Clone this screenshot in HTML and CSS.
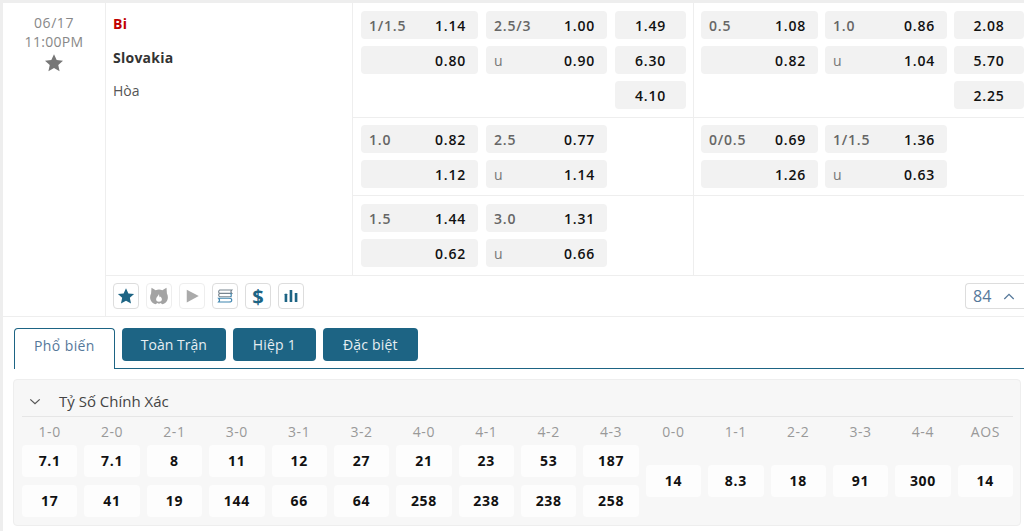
FILE: index.html
```html
<!DOCTYPE html>
<html>
<head>
  <meta charset="utf-8">
  <title>Tỷ Số</title>
  <link rel="stylesheet" href="styles.css">
</head>
<body>
  <div class="page">
    <div class="match">
      <div class="date-col">
        <div class="day">06/17</div>
        <div class="time">11:00PM</div>
        <svg class="fav" viewBox="0 0 24 24"><path d="M12 1.500l3.200 7 7.600.8-5.700 5.100 1.600 7.500L12 18.100l-6.700 3.800 1.600-7.500L1.200 9.300l7.600-.8z"/></svg>
      </div>
      <div class="main-col">
        <div class="top">
          <div class="teams">
            <div class="team red">Bi</div>
            <div class="team">Slovakia</div>
            <div class="draw">Hòa</div>
          </div>
          <div class="markets">
            <div class="mrow row-a">
              <div class="market left">
                <div class="cell"><span class="lbl">1/1.5</span><b>1.14</b></div>
                <div class="cell wide"><span class="lbl">2.5/3</span><b>1.00</b></div>
                <div class="cell x12">1.49</div>
                <div class="cell"><b>0.80</b></div>
                <div class="cell wide"><span class="lbl u">u</span><b>0.90</b></div>
                <div class="cell x12">6.30</div>
                <div class="cell x12 third">4.10</div>
              </div>
              <div class="market right">
                <div class="cell"><span class="lbl">0.5</span><b>1.08</b></div>
                <div class="cell wide"><span class="lbl">1.0</span><b>0.86</b></div>
                <div class="cell x12">2.08</div>
                <div class="cell"><b>0.82</b></div>
                <div class="cell wide"><span class="lbl u">u</span><b>1.04</b></div>
                <div class="cell x12">5.70</div>
                <div class="cell x12 third">2.25</div>
              </div>
            </div>
            <div class="mrow row-b">
              <div class="market left">
                <div class="cell"><span class="lbl">1.0</span><b>0.82</b></div>
                <div class="cell wide"><span class="lbl">2.5</span><b>0.77</b></div>
                <div></div>
                <div class="cell"><b>1.12</b></div>
                <div class="cell wide"><span class="lbl u">u</span><b>1.14</b></div>
              </div>
              <div class="market right">
                <div class="cell"><span class="lbl">0/0.5</span><b>0.69</b></div>
                <div class="cell wide"><span class="lbl">1/1.5</span><b>1.36</b></div>
                <div></div>
                <div class="cell"><b>1.26</b></div>
                <div class="cell wide"><span class="lbl u">u</span><b>0.63</b></div>
              </div>
            </div>
            <div class="mrow row-c">
              <div class="market left">
                <div class="cell"><span class="lbl">1.5</span><b>1.44</b></div>
                <div class="cell wide"><span class="lbl">3.0</span><b>1.31</b></div>
                <div></div>
                <div class="cell"><b>0.62</b></div>
                <div class="cell wide"><span class="lbl u">u</span><b>0.66</b></div>
              </div>
              <div class="market right"></div>
            </div>
          </div>
        </div>
        <div class="toolbar">
          <div class="tools">
            <span class="tool"><svg viewBox="0 0 24 24" class="blue"><path d="M12 1.500l3.200 7 7.600.8-5.700 5.100 1.600 7.600L12 18.200 5.300 22l1.600-7.600L1.200 9.300l7.600-.8z"/></svg></span>
            <span class="tool off"><svg viewBox="0 0 24 24" class="wolf"><path fill-rule="evenodd" d="M3 2l5 3c2.500-1 5.500-1 8 0l5-3 .5 7c1.500 3 1.500 6 .3 8.500-1.300 2.500-3.300 4-5.800 4.500l-2-1.500-2 .7-2-.7-2 1.500c-2.500-.5-4.500-2-5.800-4.500C1 15 1 12 2.500 9zM12 9.500c-.5 2-3.500 3.500-3.500 6.500 0 2 1.500 3 3.500 3s3.500-1 3.500-3c0-1.500-1-2.500-1.500-3.500-.5.700-1 1-1.300.8-.5-1.300-.5-2.300-.7-3.800z"/></svg></span>
            <span class="tool off"><svg viewBox="0 0 24 24" class="grey"><path d="M5 3.500L21 12 5 20.500z"/></svg></span>
            <span class="tool"><svg viewBox="0 0 24 24" class="scroll"><path class="s-top" d="M5 4h16c-1.500 1.500-1.500 3 0 4.500H5C3 7.500 3 5 5 4zM5 8.500c-2 1-2 3.500 0 4.500h16"/><path class="s-bot" d="M3.500 15h14c2 0 3.500.700 3.500 2.500S19.500 20 17.500 20h-14c1.500-1.500 1.500-3.500 0-5zM19 8.500c2 1 2 3.500 0 4.500"/></svg></span>
            <span class="tool dollar">$</span>
            <span class="tool"><svg viewBox="0 0 24 24" class="blue"><rect x="3.500" y="9" width="3.500" height="11" rx=".5"/><rect x="10.200" y="4" width="3.500" height="16" rx=".5"/><rect x="17" y="8" width="3.500" height="12" rx=".5"/></svg></span>
          </div>
          <div class="count">84 <svg viewBox="0 0 14 8"><path d="M1.500 7L7 1.500 12.500 7"/></svg></div>
        </div>
      </div>
    </div>

    <div class="tabs">
      <div class="tab active">Phổ biến</div>
      <div class="tab full">Toàn Trận</div>
      <div class="tab">Hiệp 1</div>
      <div class="tab">Đặc biệt</div>
    </div>

    <div class="panel">
      <div class="panel-head">
        <svg viewBox="0 0 14 8"><path d="M1.500 1.500L7 6.500 12.500 1.500"/></svg>
        <span>Tỷ Số Chính Xác</span>
      </div>
      <div class="scores">
        <div class="score"><span>1-0</span><b>7.1</b><b>17</b></div>
        <div class="score"><span>2-0</span><b>7.1</b><b>41</b></div>
        <div class="score"><span>2-1</span><b>8</b><b>19</b></div>
        <div class="score"><span>3-0</span><b>11</b><b>144</b></div>
        <div class="score"><span>3-1</span><b>12</b><b>66</b></div>
        <div class="score"><span>3-2</span><b>27</b><b>64</b></div>
        <div class="score"><span>4-0</span><b>21</b><b>258</b></div>
        <div class="score"><span>4-1</span><b>23</b><b>238</b></div>
        <div class="score"><span>4-2</span><b>53</b><b>238</b></div>
        <div class="score"><span>4-3</span><b>187</b><b>258</b></div>
        <div class="score even"><span>0-0</span><b>14</b></div>
        <div class="score even"><span>1-1</span><b>8.3</b></div>
        <div class="score even"><span>2-2</span><b>18</b></div>
        <div class="score even"><span>3-3</span><b>91</b></div>
        <div class="score even"><span>4-4</span><b>300</b></div>
        <div class="score even"><span>AOS</span><b>14</b></div>
      </div>
    </div>
  </div>
</body>
</html>
```

FILE: styles.css
```css
html, body {
  margin: 0;
  padding: 0;
  background: #fff;
  overflow: hidden;
}

body {
  height: 531px;
  color: #333;
  font-family: "Open Sans", "Noto Sans", sans-serif;
  font-size: 14px;
}

.page {
  height: 531px;
  box-sizing: border-box;
  border-top: 3px solid #eee;
  border-left: 3px solid #eee;
}

.match {
  display: flex;
  height: 313px;
  border-bottom: 1px solid #eee;
}

.date-col {
  flex: none;
  width: 103px;
  padding-top: 10px;
  box-sizing: border-box;
  border-right: 1px solid #eee;
  text-align: center;
  color: #888;
  line-height: 19px;
}

.day {
  letter-spacing: .6px;
}

.time {
  letter-spacing: .3px;
}

.fav {
  display: block;
  width: 20px;
  height: 20px;
  margin: 2px auto 0;
  fill: #777;
}

.main-col {
  flex: 1;
  min-width: 0;
}

.top {
  display: flex;
  height: 272px;
  border-bottom: 1px solid #eee;
}

.teams {
  flex: none;
  width: 247px;
  box-sizing: border-box;
  padding: 11px 0 0 7px;
  border-right: 1px solid #eee;
}

.team {
  height: 33.500px;
  line-height: 20px;
  font-weight: 700;
  letter-spacing: .25px;
  color: #333;
}

.team.red {
  color: #c00000;
}

.draw {
  line-height: 20px;
  color: #555;
}

.markets {
  flex: 1;
  min-width: 0;
}

.mrow {
  display: flex;
  border-bottom: 1px solid #eee;
  box-sizing: border-box;
}

.mrow:last-child {
  border-bottom: 0;
}

.row-a { height: 115px; }
.row-b { height: 78px; }
.row-c { height: 79px; }

.market {
  display: grid;
  row-gap: 7px;
  align-content: start;
  box-sizing: border-box;
  padding-top: 8px;
}

.row-b .market {
  padding-top: 7px;
}

.market.left {
  flex: none;
  width: 341px;
  padding-left: 8px;
  grid-template-columns: 117px 121px 71px;
  column-gap: 8px;
  border-right: 1px solid #eee;
}

.market.right {
  flex: 1;
  padding-left: 7px;
  grid-template-columns: 117px 122px 70px;
  column-gap: 7px;
}

.cell {
  display: flex;
  align-items: center;
  justify-content: flex-end;
  height: 28px;
  padding: 0 12px 0 8px;
  box-sizing: border-box;
  background: #f2f2f2;
  border-radius: 4px;
  color: #111;
  letter-spacing: .8px;
}

.cell b {
  font-weight: 600;
}

.lbl {
  margin-right: auto;
  color: #666;
  font-weight: 600;
}

.lbl.u {
  font-weight: 400;
  color: #777;
}

.x12 {
  justify-content: center;
  padding: 0;
  font-weight: 600;
}

.third {
  grid-column: 3;
}

.toolbar {
  display: flex;
  align-items: center;
  justify-content: space-between;
  height: 40px;
  padding-left: 7px;
}

.tools {
  display: flex;
  gap: 7px;
}

.tool {
  display: flex;
  align-items: center;
  justify-content: center;
  width: 26px;
  height: 26px;
  box-sizing: border-box;
  border: 1px solid #ddd;
  border-radius: 4px;
  color: #1d6484;
}

.tool.off {
  border-color: #eee;
}

.tool svg {
  width: 18px;
  height: 18px;
}

.tool .wolf {
  width: 20px;
  height: 20px;
}

.dollar {
  font-size: 20px;
  font-weight: 700;
}

.blue { fill: #1d6484; }
.grey { fill: #aaa; }
.wolf { fill: #a3a3a3; }

.scroll {
  fill: none;
  stroke-width: 1.500;
}

.s-top { stroke: #78858f; }
.s-bot { stroke: #3f86b0; }

.count {
  display: flex;
  align-items: center;
  gap: 12px;
  width: 62px;
  height: 26px;
  box-sizing: border-box;
  margin-right: -3px;
  padding-left: 7px;
  border: 1px solid #ddd;
  border-right: 0;
  border-radius: 4px 0 0 4px;
  font-size: 16px;
  color: #55789a;
}

.count svg {
  width: 12px;
  height: 7px;
  fill: none;
  stroke: #55789a;
  stroke-width: 1.500;
}

.tabs {
  display: flex;
  align-items: flex-start;
  gap: 7px;
  height: 40px;
  margin: 11px 0 0 11px;
  border-bottom: 1px solid #1d6484;
}

.tab {
  height: 33px;
  line-height: 33px;
  padding: 0 20px;
  background: #1d6484;
  border-radius: 4px;
  color: #e6eef2;
  letter-spacing: .2px;
}

.tab.full {
  padding: 0 19px;
  letter-spacing: 0;
}

.tab.active {
  height: 41px;
  padding: 0 19px;
  background: #fff;
  border: 1px solid #1d6484;
  border-bottom: 0;
  border-radius: 4px 4px 0 0;
  box-sizing: border-box;
  line-height: 33px;
  letter-spacing: .4px;
  color: #55789a;
}

.panel {
  margin: 10px 3px 0 10px;
  height: 147px;
  box-sizing: border-box;
  padding: 0 7px 0 8px;
  background: #f7f7f7;
  border: 1px solid #eee;
  border-radius: 4px;
}

.panel-head {
  display: flex;
  align-items: center;
  gap: 18px;
  height: 37px;
  box-sizing: border-box;
  padding: 6px 0 0 7px;
  border-bottom: 1px solid #e6e6e6;
  font-size: 15px;
  color: #444;
}

.panel-head svg {
  width: 12px;
  height: 7px;
  fill: none;
  stroke: #555;
  stroke-width: 1.500;
}

.scores {
  display: grid;
  grid-template-columns: repeat(16, 1fr);
  column-gap: 7px;
}

.score {
  display: flex;
  flex-direction: column;
  align-items: stretch;
  gap: 8px;
  text-align: center;
}

.score span {
  height: 20px;
  margin-bottom: -5px;
  padding-top: 5px;
  line-height: 20px;
  letter-spacing: .6px;
  color: #999;
}

.score b {
  height: 32px;
  line-height: 32px;
  background: #fdfdfd;
  border-radius: 4px;
  color: #111;
  font-weight: 700;
  letter-spacing: .7px;
}

.score.even b {
  margin-top: 20px;
}
```
